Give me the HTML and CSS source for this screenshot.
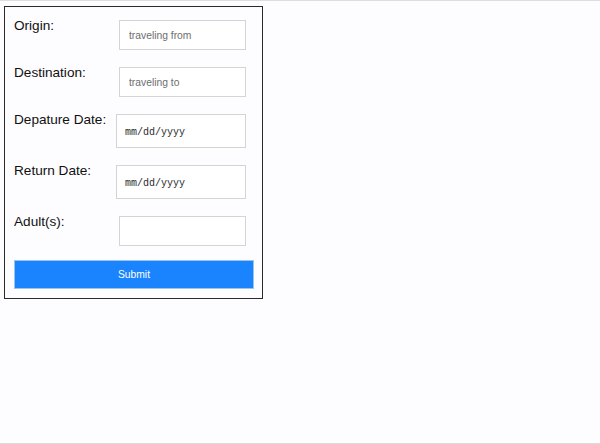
FILE: index.html
```html
<!DOCTYPE html>
<html>
<head>
<meta charset="utf-8">
<link rel="stylesheet" href="styles.css">
</head>
<body>
<div class="page">
  <form class="form">
    <div class="row">
      <label class="label">Origin:</label>
      <input class="field" type="text" placeholder="traveling from">
    </div>
    <div class="row">
      <label class="label">Destination:</label>
      <input class="field" type="text" placeholder="traveling to">
    </div>
    <div class="row">
      <label class="label">Depature Date:</label>
      <div class="field date"><span class="date-text">mm/dd/yyyy</span></div>
    </div>
    <div class="row">
      <label class="label">Return Date:</label>
      <div class="field date"><span class="date-text">mm/dd/yyyy</span></div>
    </div>
    <div class="row">
      <label class="label">Adult(s):</label>
      <input class="field" type="text">
    </div>
    <button class="submit" type="button">Submit</button>
  </form>
</div>
</body>
</html>
```

FILE: styles.css
```css
html, body {
  margin: 0;
  padding: 0;
  background: #fdfcfe;
}
.page {
  box-sizing: border-box;
  height: 444px;
  border-top: 1px solid #dddddd;
  border-bottom: 1px solid #dcdcd6;
  padding: 5px 0 0 4px;
  font-family: "Liberation Sans", Arial, sans-serif;
}
.form {
  box-sizing: border-box;
  width: 259px;
  margin: 0;
  border: 1px solid #2a2a2a;
  padding: 13px 8px 9px 9px;
  display: flex;
  flex-direction: column;
  gap: 17px;
}
.row {
  display: flex;
  justify-content: space-between;
  align-items: flex-start;
  padding-right: 8px;
}
.label {
  font-size: 13.6px;
  line-height: 16px;
  color: #111;
  margin-top: -2px;
}
.field {
  box-sizing: border-box;
  width: 127px;
  height: 30px;
  margin: 0;
  border: 1px solid #d4d4d4;
  background: #fff;
  padding: 0 9px;
  font-family: "Liberation Sans", Arial, sans-serif;
  font-size: 10.3px;
  color: #222;
  outline: none;
}
.field::placeholder {
  color: #6e6e6e;
}
.date {
  width: 130px;
  height: 34px;
  display: flex;
  align-items: center;
  padding: 2px 8px 0;
}
.date-text {
  font-family: "Liberation Mono", "Courier New", monospace;
  font-size: 10px;
  color: #2a2a2a;
}
.submit {
  box-sizing: border-box;
  width: 240px;
  height: 29px;
  margin-top: -3px;
  border: 1px solid #9cc3ea;
  background: #1a84ff;
  color: #fff;
  font-family: "Liberation Sans", Arial, sans-serif;
  font-size: 10.3px;
  padding: 0;
}
```
